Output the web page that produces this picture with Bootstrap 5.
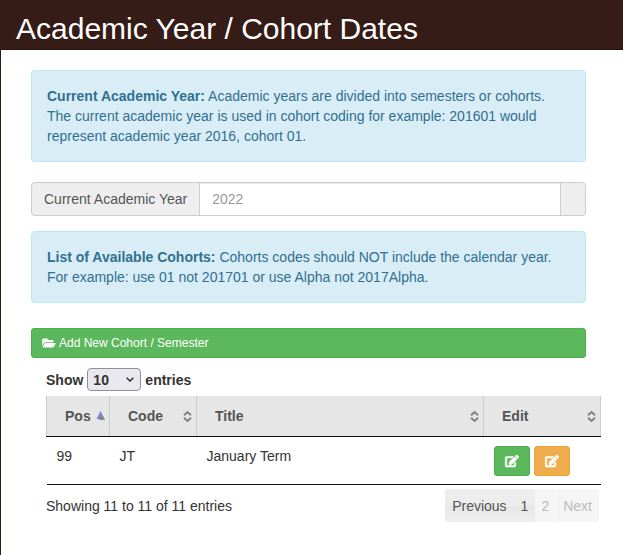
<!DOCTYPE html>
<html lang="en">
<head>
<meta charset="utf-8">
<meta name="viewport" content="width=device-width, initial-scale=1">
<title>Academic Year / Cohort Dates</title>
<link href="https://cdn.jsdelivr.net/npm/bootstrap@5.3.0/dist/css/bootstrap.min.css" rel="stylesheet">
<style>
  body { font-family: "Liberation Sans", Arial, sans-serif; font-size: 14px; line-height: 20px; color: #333; background: #fff; }
  .page-shell { border-left: 1px solid #351c16; }
  .title-bar { background: #351c16; color: #fff; padding: 12px 15px 4px 16px; margin-left: -1px; border-bottom: 1px solid #2c1510; }
  .title-bar h1 { font-size: 30px; line-height: 33px; font-weight: 400; }
  .content-area { padding: 20px 22px 20px 30px; }
  .form-part { margin-right: 15px; }
  .list-part { margin-left: 15px; }
  .alert-info { --bs-alert-bg: #d9edf7; --bs-alert-border-color: #bce8f1; --bs-alert-color: #31708f; --bs-alert-padding-x: 15px; --bs-alert-padding-y: 15px; --bs-alert-border-radius: 4px; }
  .year-group { margin: 20px 0 15px; }
  .year-group .input-group-text { font-size: 14px; line-height: 20px; padding: 6px 12px; color: #555; background: #eee; border-color: #ccc; border-radius: 4px; }
  .year-group .form-control { font-size: 14px; line-height: 20px; padding: 6px 12px; border-color: #ccc; color: #555; box-shadow: inset 0 1px 1px rgba(0,0,0,.075); }
  .year-group .form-control::placeholder { color: #999; }
  .btn-add { margin: 25px 0 10px; font-size: 12px; line-height: 18px; padding: 5px 10px; gap: 3px; --bs-btn-border-radius: 3px; }
  .btn-green { --bs-btn-bg: #5cb85c; --bs-btn-border-color: #4cae4c; --bs-btn-color: #fff; --bs-btn-hover-bg: #449d44; --bs-btn-hover-color: #fff; }
  .btn-amber { --bs-btn-bg: #f0ad4e; --bs-btn-border-color: #eea236; --bs-btn-color: #fff; --bs-btn-hover-bg: #ec971f; --bs-btn-hover-color: #fff; }
  .btn-edit { width: 36px; height: 30px; padding: 0; --bs-btn-border-radius: 3px; }
  .glyph { fill: currentColor; width: 14px; height: 12px; display: block; }
  .btn-edit .glyph { stroke: currentColor; stroke-width: 22px; overflow: visible; }
  .length-label { height: 23px; margin-bottom: 5px; }
  .length-select { width: 54px; height: 23px; padding: 0 5px; font-size: 14px; line-height: 20px; font-weight: 700; color: #333; border: 1px solid #8f8f9d; border-radius: 4px;
    background: #e9e9ed url("data:image/svg+xml,%3Csvg xmlns='http://www.w3.org/2000/svg' viewBox='0 0 8 5'%3E%3Cpath d='M.7.7 4 4 7.3.7' fill='none' stroke='%23222' stroke-width='1.3'/%3E%3C/svg%3E") no-repeat right 6px center / 8px 5px; }
  .cohorts { table-layout: fixed; margin: 0; border-bottom: 1px solid #111; color: #333; }
  .cohorts th { background: #e6e6e6; color: #555; border-right: 1px solid #ccc; border-bottom: 1px solid #111; padding: 10px 4px 10px 18px; }
  .cohorts th:first-child { border-left: 1px solid #ccc; }
  .cohorts td { padding: 9px 10px 8px; border: 0; }
  .col-pos { width: 63px; } .col-code { width: 87px; } .col-edit { width: 117px; }
  .sorter { width: 9px; height: 11px; flex: none; }
  .table-footer { padding: 4px 2px 0 0; }
  .pager { height: 33px; border-radius: 3px; overflow: hidden; }
  .pager button { border: 0; padding: 0 7px; color: #555; background: linear-gradient(#eee 0, #ececec 50%, #e6e6e6 51%, #eee 100%); }
  .pager button:disabled { padding: 0 6px; color: #bbb; background: #f5f5f5; }
  .pager button:disabled:last-child { padding: 0 7px; border-left: 1px solid #fff; }
</style>
<script src="https://cdn.jsdelivr.net/npm/bootstrap@5.3.0/dist/js/bootstrap.bundle.min.js"></script>
</head>
<body>
<svg class="d-none" aria-hidden="true">
  <symbol id="edit" viewBox="0 0 576 512" overflow="visible"><path d="M402.6 83.2l90.2 90.2c3.8 3.8 3.8 10 0 13.8L274.4 405.6l-92.8 10.3c-12.4 1.4-22.9-9.1-21.5-21.5l10.3-92.8L388.8 83.2c3.8-3.8 10-3.8 13.8 0zm162-22.9l-48.8-48.8c-15.2-15.2-39.9-15.2-55.2 0l-35.4 35.4c-3.8 3.8-3.8 10 0 13.8l90.2 90.2c3.8 3.8 10 3.8 13.8 0l35.4-35.4c15.2-15.3 15.2-40 0-55.2zM384 346.2V448H64V128h229.8c3.2 0 6.2-1.3 8.5-3.5l40-40c7.6-7.6 2.1-20.5-8.5-20.5H48C21.5 64 0 85.5 0 112v352c0 26.5 21.5 48 48 48h352c26.5 0 48-21.5 48-48V306.2c0-10.7-12.9-16-20.5-8.5l-40 40c-2.2 2.3-3.5 5.3-3.5 8.5z"/></symbol>
  <symbol id="folder" viewBox="0 0 576 512"><path d="M572.694 292.093L500.27 416.248A63.997 63.997 0 0 1 444.989 448H45.025c-18.523 0-30.064-20.093-20.731-36.093l72.424-124.155A64 64 0 0 1 152 256h399.964c18.523 0 30.064 20.093 20.73 36.093zM152 224h328v-48c0-26.51-21.49-48-48-48H272l-64-64H48C21.49 64 0 85.49 0 112v278.046l69.077-118.418C86.214 242.25 117.989 224 152 224z"/></symbol>
  <symbol id="sort" viewBox="0 0 9 11"><path d="M1 4.2 4.5 1 8 4.2M1 6.8 4.5 10 8 6.8" fill="none" stroke="#808080" stroke-width="1.9"/></symbol>
  <symbol id="sort-up" viewBox="0 0 9 11"><path d="M4.5 0 8.500 8H.5z" fill="#7c83dc"/><path d="M5 5h2l2 4H3z" fill="#888"/></symbol>
</svg>
<div class="page-shell min-vh-100">
  <header class="title-bar"><h1 class="m-0">Academic Year / Cohort Dates</h1></header>
  <main class="content-area">
    <div class="form-part">
      <div class="alert alert-info m-0"><strong>Current Academic Year:</strong> Academic years are divided into semesters or cohorts. The current academic year is used in cohort coding for example: 201601 would represent academic year 2016, cohort 01.</div>
      <div class="input-group year-group">
        <label class="input-group-text" for="year">Current Academic Year</label>
        <input class="form-control" id="year" type="text" placeholder="2022">
        <span class="input-group-text"></span>
      </div>
      <div class="alert alert-info m-0"><strong>List of Available Cohorts:</strong> Cohorts codes should NOT include the calendar year. For example: use 01 not 201701 or use Alpha not 2017Alpha.</div>
      <button type="button" class="btn btn-green btn-add w-100 d-flex align-items-center"><svg class="glyph" aria-hidden="true"><use href="#folder"/></svg>Add New Cohort / Semester</button>
    </div>
    <section class="list-part">
      <div class="length-label d-flex align-items-center gap-1 fw-bold">
        <label for="length">Show</label>
        <select class="length-select form-select" id="length"><option>10</option><option>25</option><option>50</option></select>
        <span>entries</span>
      </div>
      <table class="table cohorts">
        <thead>
          <tr>
            <th class="col-pos"><div class="d-flex justify-content-between align-items-center">Pos<svg class="sorter" aria-hidden="true"><use href="#sort-up"/></svg></div></th>
            <th class="col-code"><div class="d-flex justify-content-between align-items-center">Code<svg class="sorter" aria-hidden="true"><use href="#sort"/></svg></div></th>
            <th><div class="d-flex justify-content-between align-items-center">Title<svg class="sorter" aria-hidden="true"><use href="#sort"/></svg></div></th>
            <th class="col-edit"><div class="d-flex justify-content-between align-items-center">Edit<svg class="sorter" aria-hidden="true"><use href="#sort"/></svg></div></th>
          </tr>
        </thead>
        <tbody>
          <tr>
            <td>99</td><td>JT</td><td>January Term</td>
            <td><div class="d-flex gap-1">
              <button type="button" class="btn btn-green btn-edit d-flex align-items-center justify-content-center" aria-label="Edit cohort"><svg class="glyph" aria-hidden="true"><use href="#edit"/></svg></button>
              <button type="button" class="btn btn-amber btn-edit d-flex align-items-center justify-content-center" aria-label="Edit dates"><svg class="glyph" aria-hidden="true"><use href="#edit"/></svg></button>
            </div></td>
          </tr>
        </tbody>
      </table>
      <div class="table-footer d-flex justify-content-between align-items-center">
        <div>Showing 11 to 11 of 11 entries</div>
        <nav class="pager d-flex" aria-label="Table pages">
          <button type="button">Previous</button><button type="button">1</button><button type="button" disabled>2</button><button type="button" disabled>Next</button>
        </nav>
      </div>
    </section>
  </main>
</div>
</body>
</html>
